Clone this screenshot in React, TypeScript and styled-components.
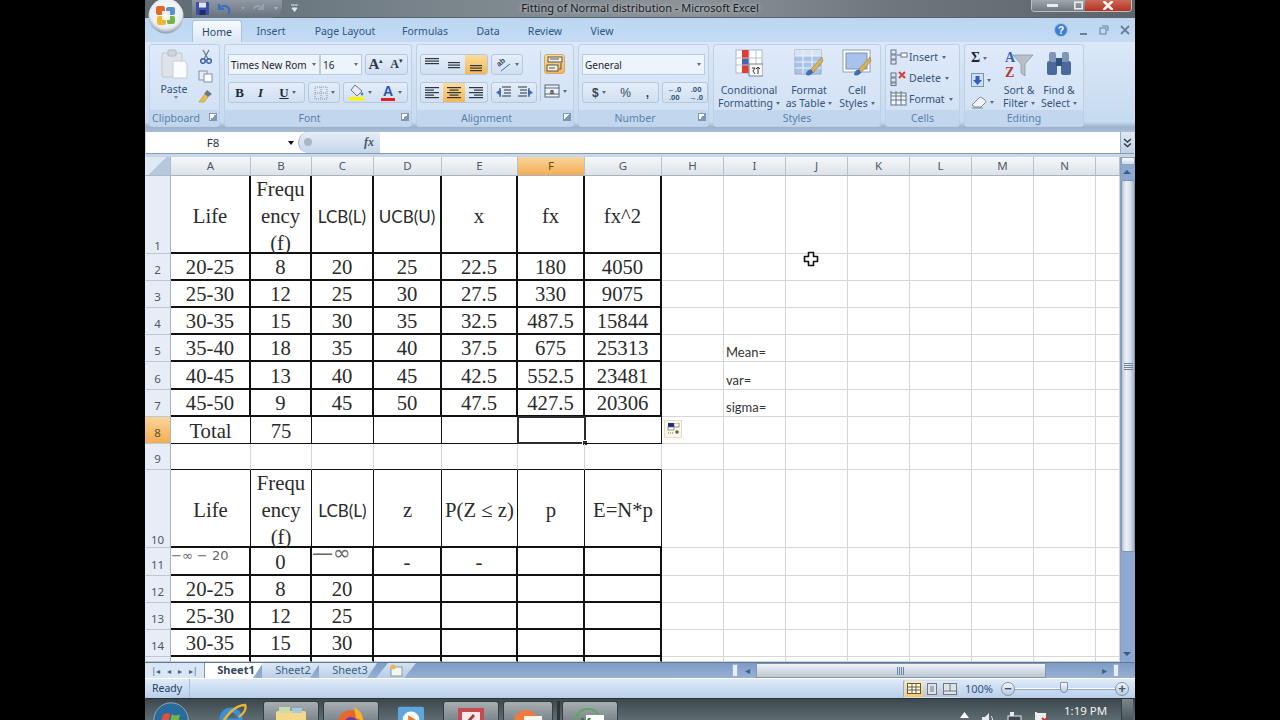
import React from 'react';
import styled, { createGlobalStyle } from 'styled-components';

const GlobalStyle = createGlobalStyle`
  html, body { margin: 0; padding: 0; background: #000; overflow: hidden; }
  * { box-sizing: border-box; }
`;

const UI_FONT = `'Noto Sans', 'Liberation Sans', sans-serif`;
const COLUMNS = [26, 80, 61, 62, 68, 76, 67, 77, 62, 62, 62, 62, 62, 62, 62, 24];
const COLUMN_NAMES = ['A', 'B', 'C', 'D', 'E', 'F', 'G', 'H', 'I', 'J', 'K', 'L', 'M', 'N', ''];

type Line = 'grid' | 'thin' | 'thick';
type RowData = { num: number; h: number; v: Line; b: Line; cells: string[] };

const thick = (num: number, cells: string[], h = 27): RowData => ({ num, h, v: 'thick', b: 'thick', cells });
const HEAD = 'Frequ\nency\n(f)';

const ROWS: RowData[] = [
  thick(1, ['Life', HEAD, 'LCB(L)', 'UCB(U)', 'x', 'fx', 'fx^2'], 78),
  thick(2, ['20-25', '8', '20', '25', '22.5', '180', '4050']),
  thick(3, ['25-30', '12', '25', '30', '27.5', '330', '9075']),
  thick(4, ['30-35', '15', '30', '35', '32.5', '487.5', '15844']),
  thick(5, ['35-40', '18', '35', '40', '37.5', '675', '25313']),
  thick(6, ['40-45', '13', '40', '45', '42.5', '552.5', '23481'], 28),
  thick(7, ['45-50', '9', '45', '50', '47.5', '427.5', '20306']),
  { num: 8, h: 27, v: 'thin', b: 'thin', cells: ['Total', '75', '', '', '', '', ''] },
  { num: 9, h: 26, v: 'grid', b: 'thin', cells: ['', '', '', '', '', '', ''] },
  { num: 10, h: 78, v: 'thin', b: 'thick', cells: ['Life', HEAD, 'LCB(L)', 'z', 'P(Z ≤ z)', 'p', 'E=N*p'] },
  thick(11, ['', '0', '', '-', '-', '', ''], 28),
  thick(12, ['20-25', '8', '20', '', '', '', '']),
  thick(13, ['25-30', '12', '25', '', '', '', '']),
  thick(14, ['30-35', '15', '30', '', '', '', '']),
  { num: 15, h: 5, v: 'thick', b: 'grid', cells: ['', '', '', '', '', '', ''] },
];

const SIDE_NOTES: Record<number, string> = { 5: 'Mean=', 6: 'var=', 7: 'sigma=' };
const lineColor = (l: Line) => (l === 'grid' ? '#d4d6d8' : '#111');
const lineWidth = (l: Line) => (l === 'thick' ? 2 : 1);

export default function App() {
  return (
    <Page>
      <GlobalStyle />
      <Excel>
        <TitleBar />
        <TabRow />
        <Ribbon />
        <FormulaBar />
        <Sheet />
        <SheetTabs />
        <StatusBar />
        <TaskBar />
      </Excel>
    </Page>
  );
}

function TitleBar() {
  return (
    <TitleWrap>
      <Orb viewBox="0 0 36 36">
        <defs>
          <radialGradient id="orbg" cx="50%" cy="40%" r="60%">
            <stop offset="0" stopColor="#fff" />
            <stop offset="0.75" stopColor="#e8edf2" />
            <stop offset="1" stopColor="#8f9aa5" />
          </radialGradient>
        </defs>
        <circle cx="18" cy="18" r="17.5" fill="url(#orbg)" />
        <rect x="8" y="8" width="9" height="9" rx="2" fill="#e2682c" />
        <rect x="18" y="9" width="9" height="8" rx="2" fill="#5a8fd0" />
        <rect x="9" y="18" width="9" height="9" rx="2" fill="#f2b632" />
        <rect x="19" y="18" width="8" height="8" rx="2" fill="#73b34a" />
        <rect x="14" y="13" width="8" height="9" fill="#fff" opacity="0.85" />
      </Orb>
      <QuickAccess>
        <svg width="15" height="15" viewBox="0 0 15 15">
          <rect x="1" y="1" width="13" height="13" rx="1" fill="#3f4fa6" />
          <rect x="4" y="1.5" width="7" height="5" fill="#dfe6f5" />
          <rect x="4.5" y="9" width="6" height="5" fill="#1f2a70" />
        </svg>
        <svg width="16" height="14" viewBox="0 0 16 14" fill="none">
          <path d="M3 2v5h5M3.5 6.5C6 3 11 3 13 7c.8 2 .3 4-1 5.5" stroke="#3d6fc0" strokeWidth="2.2" />
        </svg>
        <SmallCaret $color="#9aa4ae" />
        <svg width="14" height="14" viewBox="0 0 14 14" fill="none" opacity="0.35">
          <path d="M12 2v5H7M11.5 6.500C9 3 4.500 3 2.500 7" stroke="#c4ccd4" strokeWidth="2" />
        </svg>
        <SmallCaret $color="#aab2ba" />
      </QuickAccess>
      <QuickMore>
        <svg width="7" height="9" viewBox="0 0 7 9">
          <path d="M0 1h7M1 4h5l-2.500 3.500z" stroke="#dfe6ee" fill="#dfe6ee" />
        </svg>
      </QuickMore>
      <TitleText>Fitting of Normal distribution - Microsoft Excel</TitleText>
      <WindowButtons>
        <WindowButton $w={40}>
          <svg width="11" height="4" viewBox="0 0 11 4"><rect width="11" height="3" fill="#e8ecef" /></svg>
        </WindowButton>
        <WindowButton $w={13}>
          <svg width="9" height="9" viewBox="0 0 11 10" fill="none">
            <rect x="1" y="1" width="9" height="8" stroke="#e8ecef" strokeWidth="2" />
          </svg>
        </WindowButton>
        <WindowButton $w={46} $close>
          <svg width="12" height="9" viewBox="0 0 12 9" fill="none">
            <path d="M1.500 0l9 9M10.500 0l-9 9" stroke="#f4f4f4" strokeWidth="2.500" />
          </svg>
        </WindowButton>
      </WindowButtons>
    </TitleWrap>
  );
}

const TABS: [string, number][] = [
  ['Insert', 58],
  ['Page Layout', 90],
  ['Formulas', 70],
  ['Data', 56],
  ['Review', 58],
  ['View', 56],
];

function TabRow() {
  return (
    <TabsWrap>
      <ActiveTab>Home</ActiveTab>
      {TABS.map(([name, w]) => (
        <Tab key={name} $w={w}>{name}</Tab>
      ))}
      <TabTools>
        <svg width="14" height="14" viewBox="0 0 14 14">
          <circle cx="7" cy="7" r="6.500" fill="#3f7fd0" stroke="#a9c6e8" />
          <text x="7" y="10.500" fontSize="10" fontWeight="700" textAnchor="middle" fill="#fff" fontFamily="Liberation Sans">?</text>
        </svg>
        <svg width="9" height="9" viewBox="0 0 9 9"><rect x="1" y="7" width="7" height="2" fill="#6d7f94" /></svg>
        <svg width="10" height="10" viewBox="0 0 10 10" fill="none">
          <rect x="1" y="3" width="6" height="6" stroke="#6d7f94" /><path d="M3 1h6v5" stroke="#6d7f94" />
        </svg>
        <svg width="10" height="10" viewBox="0 0 10 10"><path d="M1 1l8 8M9 1l-8 8" stroke="#6d7f94" strokeWidth="1.800" /></svg>
      </TabTools>
    </TabsWrap>
  );
}

function AlignLines({ x, align = 'c', top = 1 }: { x: number[]; align?: 'l' | 'c' | 'r'; top?: number }) {
  const left = (w: number) => (align === 'l' ? 0 : align === 'r' ? 14 - w : (14 - w) / 2);
  return (
    <svg width="14" height="14" viewBox="0 0 14 14">
      {x.map((w, i) => (
        <rect key={i} x={left(w)} y={i * 2.5 + top} width={w} height="1.200" fill="#2d3640" />
      ))}
    </svg>
  );
}

function Ribbon() {
  return (
    <RibbonWrap>
      <Group $w={71} label="Clipboard" launcher>
        <ClipBody>
          <PasteColumn>
            <svg width="28" height="32" viewBox="0 0 28 32">
              <rect x="2" y="5" width="20" height="24" rx="1" fill="#dfe3e8" stroke="#c2c8d0" />
              <rect x="8" y="2" width="8" height="6" rx="1" fill="#cfd4da" stroke="#b5bcc5" />
              <path d="M13 13h12l2 3v14H13z" fill="#fbfcfd" stroke="#c5ccd4" />
            </svg>
            <PasteLabel>Paste</PasteLabel>
            <SmallCaret $color="#7a8a9c" />
          </PasteColumn>
          <ClipTools>
            <svg width="14" height="15" viewBox="0 0 14 15" fill="none">
              <path d="M4 1l5 9M10 1L5 10" stroke="#6b7c90" strokeWidth="1.300" />
              <circle cx="4" cy="12" r="2.300" stroke="#3f62a8" strokeWidth="1.500" />
              <circle cx="10" cy="12" r="2.300" stroke="#3f62a8" strokeWidth="1.500" />
            </svg>
            <svg width="15" height="13" viewBox="0 0 15 13">
              <rect x="1" y="1" width="8" height="9" fill="#e8eef6" stroke="#7d93ad" />
              <rect x="6" y="4" width="8" height="8" fill="#fff" stroke="#7d93ad" />
            </svg>
            <svg width="15" height="14" viewBox="0 0 15 14">
              <path d="M9 1l5 4-4 3-4-3z" fill="#6a7788" />
              <path d="M7 5l3 3-4 5H1z" fill="#e8c04e" stroke="#b08f2c" strokeWidth="0.600" />
            </svg>
          </ClipTools>
        </ClipBody>
      </Group>

      <Group $w={188} label="Font" launcher>
        <ToolRows>
          <ToolRow>
            <Combo $w={92} $join>Times New Rom<SmallCaret $color="#5c6b7c" /></Combo>
            <Combo $w={42}>16<SmallCaret $color="#5c6b7c" /></Combo>
            <ToolSet>
              <ToolBtn $w={20}><GrowGlyph>A</GrowGlyph><Tip>▴</Tip></ToolBtn>
              <ToolBtn $w={21}><ShrinkGlyph>A</ShrinkGlyph><Tip>▾</Tip></ToolBtn>
            </ToolSet>
          </ToolRow>
          <ToolRow>
            <ToolSet>
              <ToolBtn $w={21}><Letter $bold>B</Letter></ToolBtn>
              <ToolBtn $w={21}><Letter $italic>I</Letter></ToolBtn>
              <ToolBtn $w={33}><Letter $under>U</Letter><SmallCaret $color="#5c6b7c" /></ToolBtn>
            </ToolSet>
            <ToolSet>
              <ToolBtn $w={30}>
                <svg width="14" height="14" viewBox="0 0 14 14" fill="none" stroke="#8a96a4" strokeDasharray="1 1">
                  <rect x="1" y="1" width="12" height="12" /><path d="M7 1v12M1 7h12" />
                </svg>
                <SmallCaret $color="#5c6b7c" />
              </ToolBtn>
            </ToolSet>
            <ToolSet>
              <ToolBtn $w={32}>
                <svg width="17" height="17" viewBox="0 0 17 17">
                  <path d="M7 1l7 6-5 5-6-6z" fill="#e8eef5" stroke="#6b7785" />
                  <circle cx="14" cy="10" r="1.400" fill="#4a7ec4" />
                  <rect x="1" y="13" width="15" height="3.500" fill="#fff200" />
                </svg>
                <SmallCaret $color="#5c6b7c" />
              </ToolBtn>
              <ToolBtn $w={31}>
                <ColorA>A</ColorA>
                <SmallCaret $color="#5c6b7c" />
              </ToolBtn>
            </ToolSet>
          </ToolRow>
        </ToolRows>
      </Group>

      <Group $w={158} label="Alignment" launcher>
        <AlignBody>
          <ToolRows>
            <ToolRow>
              <ToolSet>
                <ToolBtn $w={22}><AlignLines x={[14, 14, 14]} top={0} /></ToolBtn>
                <ToolBtn $w={22}><AlignLines x={[12, 12, 12]} top={4} /></ToolBtn>
                <ToolBtn $w={22} $on><AlignLines x={[12, 12, 12]} top={7} /></ToolBtn>
              </ToolSet>
              <ToolSet>
                <ToolBtn $w={30}>
                  <svg width="16" height="16" viewBox="0 0 16 16" fill="none">
                    <text x="0" y="0" fontSize="7.500" fontWeight="700" fill="#3a4654" fontFamily="Liberation Sans" transform="translate(3 10) rotate(-40)">ab</text>
                    <path d="M5 14l9-7" stroke="#3f6db5" />
                  </svg>
                  <SmallCaret $color="#5c6b7c" />
                </ToolBtn>
              </ToolSet>
            </ToolRow>
            <ToolRow>
              <ToolSet>
                <ToolBtn $w={22}><AlignLines x={[14, 9, 14, 9, 14]} align="l" /></ToolBtn>
                <ToolBtn $w={22} $on><AlignLines x={[14, 9, 14, 9, 14]} /></ToolBtn>
                <ToolBtn $w={22}><AlignLines x={[14, 9, 14, 9, 14]} align="r" /></ToolBtn>
              </ToolSet>
              <ToolSet>
                <ToolBtn $w={22}>
                  <svg width="15" height="13" viewBox="0 0 15 13">
                    <path d="M6 1h9M8 4h7M8 7h7M6 10h9M4 2v9" stroke="#2d3640" fill="none" />
                    <path d="M0 6.500L5 3v7z" fill="#3f6db5" />
                  </svg>
                </ToolBtn>
                <ToolBtn $w={22}>
                  <svg width="15" height="13" viewBox="0 0 15 13">
                    <path d="M0 1h9M2 4h7M2 7h7M0 10h9M11 2v9" stroke="#2d3640" fill="none" />
                    <path d="M15 6.500L10 3v7z" fill="#3f6db5" />
                  </svg>
                </ToolBtn>
              </ToolSet>
            </ToolRow>
          </ToolRows>
          <AlignSide>
            <WrapButton>
              <svg width="17" height="17" viewBox="0 0 17 17" fill="none" stroke="#4a5562">
                <rect x="2" y="1" width="14" height="5" fill="#f8f2dc" />
                <rect x="1" y="9" width="11" height="6" fill="#f8f2dc" />
                <path d="M4 3h9M3 12h6M15 7v6h-2" />
              </svg>
            </WrapButton>
            <MergeButton>
              <svg width="16" height="14" viewBox="0 0 16 14" fill="none" stroke="#56657a">
                <rect x="1" y="1" width="14" height="12" fill="#eef3f9" />
                <path d="M1 4h14M1 10h14" />
                <text x="8" y="9.500" fontSize="7" fontWeight="700" textAnchor="middle" fill="#333" stroke="none" fontFamily="Liberation Sans">a</text>
              </svg>
              <SmallCaret $color="#5c6b7c" />
            </MergeButton>
          </AlignSide>
        </AlignBody>
      </Group>

      <Group $w={131} label="Number" launcher>
        <ToolRows>
          <ToolRow>
            <Combo $w={123}>General<SmallCaret $color="#5c6b7c" /></Combo>
          </ToolRow>
          <ToolRow>
            <ToolSet>
              <ToolBtn $w={32}><NumGlyph $bold>$</NumGlyph><SmallCaret $color="#5c6b7c" /></ToolBtn>
              <ToolBtn $w={22}><NumGlyph>%</NumGlyph></ToolBtn>
              <ToolBtn $w={22}><NumGlyph $bold>,</NumGlyph></ToolBtn>
            </ToolSet>
            <ToolSet>
              <ToolBtn $w={22}><Decimal><b>←.0</b><b>.00</b></Decimal></ToolBtn>
              <ToolBtn $w={22}><Decimal><b>.00</b><b>→.0</b></Decimal></ToolBtn>
            </ToolSet>
          </ToolRow>
        </ToolRows>
      </Group>

      <Group $w={168} label="Styles">
        <BigButtons>
          <BigButton $w={62} first="Conditional" second="Formatting">
            <svg width="28" height="28" viewBox="0 0 28 28">
              <rect x="1" y="1" width="26" height="23" fill="#fff" stroke="#aeb9c6" />
              <rect x="7" y="1" width="7" height="9" fill="#e03c31" />
              <rect x="7" y="10" width="7" height="6" fill="#4a62b8" />
              <rect x="7" y="16" width="7" height="8" fill="#e03c31" />
              <path d="M1 9h26M1 16h26M14 1v23M21 1v23" stroke="#b8c3d0" fill="none" />
              <rect x="14" y="15" width="14" height="12" fill="#f7f8fa" stroke="#76808c" />
              <path d="M17 19h3l-2 3 2 3M23 18v7M21 20l2-2 2 2" stroke="#333" fill="none" />
            </svg>
          </BigButton>
          <BigButton $w={58} first="Format" second="as Table">
            <svg width="30" height="28" viewBox="0 0 30 28">
              <rect x="1" y="1" width="26" height="24" fill="#a9c4ea" stroke="#9aa9bb" />
              <rect x="1" y="1" width="26" height="6" fill="#d9e4f2" />
              <path d="M1 7h26M1 13h26M1 19h26M9 1v24M18 1v24" stroke="#eef3fa" fill="none" />
              <path d="M28 8L16 21l3 3 10-12z" fill="#d7b25a" stroke="#8a7032" strokeWidth="0.500" />
              <path d="M12 26c0-4 3-6 6-5l1 3c-2 2-4 3-7 2z" fill="#3f6db5" />
            </svg>
          </BigButton>
          <BigButton $w={38} first="Cell" second="Styles">
            <svg width="30" height="28" viewBox="0 0 30 28">
              <rect x="1" y="1" width="27" height="22" fill="#fff" stroke="#8ea0b5" />
              <rect x="4" y="4" width="21" height="16" fill="#a8c2f0" stroke="#7e93b0" />
              <path d="M28 8L16 21l3 3 10-12z" fill="#d7b25a" stroke="#8a7032" strokeWidth="0.500" />
              <path d="M12 26c0-4 3-6 6-5l1 3c-2 2-4 3-7 2z" fill="#3f6db5" />
            </svg>
          </BigButton>
        </BigButtons>
      </Group>

      <Group $w={75} label="Cells">
        <CellsList>
          <CellsItem>
            <svg width="18" height="16" viewBox="0 0 18 16" fill="none" stroke="#667585">
              <rect x="1" y="1" width="5" height="4" /><rect x="1" y="6" width="5" height="4" /><rect x="1" y="11" width="5" height="4" />
              <rect x="11" y="4" width="6" height="4" fill="#fff" />
              <path d="M11 6H7" stroke="#3f6db5" />
            </svg>
            Insert<SmallCaret $color="#5c6b7c" />
          </CellsItem>
          <CellsItem>
            <svg width="18" height="16" viewBox="0 0 18 16" fill="none" stroke="#667585">
              <rect x="1" y="3" width="5" height="4" /><rect x="1" y="8" width="5" height="4" /><rect x="1" y="13" width="5" height="2.500" />
              <path d="M9 2l6 6M15 2L9 8" stroke="#d8413a" strokeWidth="2" />
            </svg>
            Delete<SmallCaret $color="#5c6b7c" />
          </CellsItem>
          <CellsItem>
            <svg width="18" height="16" viewBox="0 0 18 16" fill="none" stroke="#667585">
              <rect x="1" y="2" width="15" height="12" fill="#f3f5f8" />
              <path d="M1 5h15M1 9h15M6 2v12M11 2v12M1 0v2M6 0v2M11 0v2" />
            </svg>
            Format<SmallCaret $color="#5c6b7c" />
          </CellsItem>
        </CellsList>
      </Group>

      <Group $w={120} label="Editing">
        <EditBody>
          <EditTools>
            <EditTool><Sigma>Σ</Sigma><SmallCaret $color="#5c6b7c" /></EditTool>
            <EditTool>
              <svg width="13" height="14" viewBox="0 0 13 14">
                <rect x="0.500" y="0.500" width="12" height="13" fill="#cfe0f5" stroke="#7e93b0" />
                <path d="M4.500 3h4v4H11l-4.500 5L2 7h2.500z" fill="#2f62c0" />
              </svg>
              <SmallCaret $color="#5c6b7c" />
            </EditTool>
            <EditTool>
              <svg width="16" height="13" viewBox="0 0 16 13">
                <path d="M1 9l7-7c1-1 2-1 3 0l3 2c1 1 1 2 0 3l-4 4H4z" fill="#f3f4f6" stroke="#7a8794" />
                <path d="M1 12h11" stroke="#7a8794" />
              </svg>
              <SmallCaret $color="#5c6b7c" />
            </EditTool>
          </EditTools>
          <BigButton $w={40} first="Sort &" second="Filter">
            <svg width="30" height="30" viewBox="0 0 30 30">
              <text x="1" y="13" fontSize="14" fontWeight="700" fill="#3a5fae" fontFamily="Liberation Serif">A</text>
              <text x="1" y="28" fontSize="14" fontWeight="700" fill="#b5392c" fontFamily="Liberation Serif">Z</text>
              <path d="M9 6h20l-8 9v12l-4-3v-9z" fill="#b9bfc6" stroke="#7f8891" strokeWidth="0.600" />
            </svg>
          </BigButton>
          <BigButton $w={40} first="Find &" second="Select">
            <svg width="28" height="28" viewBox="0 0 28 28">
              <rect x="2" y="12" width="10" height="14" rx="2" fill="#4a6a9c" />
              <rect x="16" y="12" width="10" height="14" rx="2" fill="#4a6a9c" />
              <rect x="4" y="3" width="7" height="10" rx="2" fill="#7f96b8" />
              <rect x="17" y="3" width="7" height="10" rx="2" fill="#7f96b8" />
              <rect x="11" y="9" width="6" height="8" fill="#35507e" />
            </svg>
          </BigButton>
        </EditBody>
      </Group>
    </RibbonWrap>
  );
}

function Group({ $w, label, launcher, children }: { $w: number; label: string; launcher?: boolean; children: React.ReactNode }) {
  return (
    <GroupBox $w={$w}>
      <GroupBody>{children}</GroupBody>
      <GroupLabel $launcher={launcher}>
        {label}
        {launcher && <Launcher />}
      </GroupLabel>
    </GroupBox>
  );
}

function BigButton({ $w, first, second, children }: { $w: number; first: string; second: string; children: React.ReactNode }) {
  return (
    <BigButtonBox $w={$w}>
      <BigIcon>{children}</BigIcon>
      <span>{first}</span>
      <BigSecond>{second}<SmallCaret $color="#5c6b7c" /></BigSecond>
    </BigButtonBox>
  );
}

function FormulaBar() {
  return (
    <FormulaWrap>
      <FormulaRow>
        <NameBox>
          F8
          <NameArrow />
        </NameBox>
        <FxPill>
          <FxDot />
          <Fx>fx</Fx>
        </FxPill>
        <FormulaInput />
        <FormulaExpand>
          <svg width="9" height="10" viewBox="0 0 9 10" fill="none" stroke="#2f3a46" strokeWidth="1.400">
            <path d="M1 1l3.500 3L8 1M1 5.500l3.500 3 3.500-3" />
          </svg>
        </FormulaExpand>
      </FormulaRow>
    </FormulaWrap>
  );
}

function Sheet() {
  return (
    <SheetWrap>
      <Grid>
        <Corner />
        {COLUMN_NAMES.map((name) => (
          <ColHead key={name || 'end'} $on={name === 'F'}>{name}</ColHead>
        ))}
        {ROWS.map((row) => (
          <SheetRow key={row.num} row={row} />
        ))}
      </Grid>
      <VScroll>
        <SplitBox />
        <ScrollArrow $up />
        <VThumb><Grip /></VThumb>
        <VTrack />
        <ScrollArrow />
      </VScroll>
    </SheetWrap>
  );
}

function SheetRow({ row }: { row: RowData }) {
  const tall = row.h > 30;
  return (
    <>
      <RowHead $on={row.num === 8} $tall={tall}>{row.h > 6 ? row.num : ''}</RowHead>
      {COLUMN_NAMES.map((_, i) => {
        const inTable = i < 7;
        const text = inTable ? row.cells[i] : '';
        const sans = text === 'LCB(L)' || text === 'UCB(U)';
        return (
          <Cell
            key={i}
            $v={inTable ? row.v : 'grid'}
            $b={inTable ? row.b : 'grid'}
            $sans={sans}
            $tall={tall}
          >
            {text}
            {row.num === 11 && i === 0 && <MathNote>−∞ − 20</MathNote>}
            {row.num === 11 && i === 2 && <MathNote $big>—∞</MathNote>}
            {i === 8 && SIDE_NOTES[row.num] && <SideNote>{SIDE_NOTES[row.num]}</SideNote>}
            {row.num === 8 && i === 5 && <Selection><FillHandle /></Selection>}
            {row.num === 8 && i === 7 && (
              <PasteOptions>
                <svg width="13" height="12" viewBox="0 0 13 12">
                  <rect x="1" y="0" width="6" height="4" fill="#1c2f86" />
                  <rect x="7" y="0" width="5" height="4" fill="#fff" stroke="#555" strokeWidth="0.600" />
                  <rect x="1" y="4" width="6" height="3" fill="#fff" stroke="#555" strokeWidth="0.600" />
                  <path d="M1 10h5" stroke="#666" strokeDasharray="1 1" />
                  <path d="M10 7v4M8 9h4" stroke="#333" />
                </svg>
              </PasteOptions>
            )}
            {row.num === 2 && i === 9 && (
              <CellCursor viewBox="0 0 16 16">
                <path d="M5.500 1.500h5v4h4v5h-4v4h-5v-4h-4v-5h4z" fill="#fff" stroke="#111" strokeWidth="1.600" strokeLinejoin="round" />
              </CellCursor>
            )}
          </Cell>
        );
      })}
    </>
  );
}

function SheetTabs() {
  return (
    <TabsBar>
      <NavArrows>
        <NavArrow>|◂</NavArrow>
        <NavArrow>◂</NavArrow>
        <NavArrow>▸</NavArrow>
        <NavArrow>▸|</NavArrow>
      </NavArrows>
      <SheetTab $active>Sheet1</SheetTab>
      <SheetTab>Sheet2</SheetTab>
      <SheetTab>Sheet3</SheetTab>
      <NewSheet>
        <svg width="15" height="13" viewBox="0 0 15 13">
          <rect x="2" y="3" width="11" height="9" fill="#f5f6f2" stroke="#8a97a6" />
          <circle cx="4" cy="3" r="2.500" fill="#e8b94c" />
        </svg>
      </NewSheet>
      <TabsFill />
      <SplitHandle />
      <HArrow>◂</HArrow>
      <HThumb><Grip $flat /></HThumb>
      <HTrack />
      <HArrow>▸</HArrow>
      <SplitHandle />
      <TabsEnd />
    </TabsBar>
  );
}

function StatusBar() {
  return (
    <StatusWrap>
      <StatusText>Ready</StatusText>
      <StatusFill />
      <ViewButtons>
        <ViewButton $on>
          <svg width="14" height="11" viewBox="0 0 14 11" fill="#fff" stroke="#6a5a2c">
            <rect x="0.500" y="0.500" width="13" height="10" /><path d="M0 4h14M0 7h14M5 0v11M9 0v11" fill="none" />
          </svg>
        </ViewButton>
        <ViewButton>
          <svg width="12" height="12" viewBox="0 0 12 12" fill="#dfe3e8" stroke="#6d7886">
            <rect x="1.500" y="0.500" width="9" height="11" /><path d="M4 4h4M4 6h4M4 8h4" />
          </svg>
        </ViewButton>
        <ViewButton>
          <svg width="14" height="12" viewBox="0 0 14 12" fill="#dfe3e8" stroke="#6d7886">
            <rect x="0.500" y="0.500" width="13" height="11" /><path d="M7 0v8M0 8h14" />
          </svg>
        </ViewButton>
      </ViewButtons>
      <ZoomText>100%</ZoomText>
      <ZoomButton>−</ZoomButton>
      <ZoomTrack><ZoomThumb /></ZoomTrack>
      <ZoomButton>+</ZoomButton>
    </StatusWrap>
  );
}

function TaskBar() {
  return (
    <TaskWrap>
      <StartOrb viewBox="0 0 44 44">
        <circle cx="22" cy="22" r="21" fill="#2b6a9c" stroke="#9fb8c6" />
        <path d="M12 16c4-3 7-3 9-1l-2 9c-2-2-5-2-9 1z" fill="#e0523a" />
        <path d="M23 15c3 2 6 2 10 0l-2 9c-4 2-7 2-10 0z" fill="#74b843" />
        <path d="M10 27c4-3 7-3 9-1l-1 6c-3-2-6-2-9 0z" fill="#3f8fd8" />
        <path d="M20 26c3 2 6 2 10 0l-1 6c-4 2-7 2-10 0z" fill="#f0c034" />
      </StartOrb>
      <TaskIcon $w={72} $pad={14}>
        <svg width="32" height="32" viewBox="0 0 32 32" fill="none">
          <circle cx="15" cy="17" r="9" stroke="#3a8fdc" strokeWidth="5" />
          <path d="M4 18h22" stroke="#3a8fdc" strokeWidth="3" />
          <path d="M4 26C10 12 20 3 29 3c2 4-2 9-6 12" stroke="#e8b732" strokeWidth="2.500" />
        </svg>
      </TaskIcon>
      <TaskButton>
        <svg width="32" height="30" viewBox="0 0 32 30">
          <rect x="1" y="6" width="30" height="22" rx="2" fill="#f3d989" />
          <rect x="4" y="2" width="11" height="6" fill="#c8dcae" /><rect x="17" y="3" width="10" height="5" fill="#a9c9e2" />
        </svg>
      </TaskButton>
      <TaskButton>
        <svg width="30" height="32" viewBox="0 0 30 32">
          <circle cx="15" cy="18" r="13" fill="#e8682a" />
          <circle cx="15" cy="19" r="7" fill="#6a3bb0" />
          <path d="M18 2c6 3 9 8 9 14l-7-3z" fill="#f5b52c" />
        </svg>
      </TaskButton>
      <TaskIcon $w={60}>
        <svg width="28" height="32" viewBox="0 0 30 32">
          <rect x="1" y="4" width="28" height="26" rx="2" fill="#5ea6dc" />
          <circle cx="15" cy="18" r="9" fill="#fff" />
          <path d="M12 13l8 5-8 5z" fill="#ee7a20" />
        </svg>
      </TaskIcon>
      <TaskButton>
        <svg width="30" height="32" viewBox="0 0 30 32">
          <rect x="2" y="3" width="26" height="27" fill="#c84a4e" />
          <rect x="6" y="7" width="18" height="20" fill="#f6eaea" />
          <path d="M9 18l8-9 2 2-8 9z" fill="#a83a3e" />
        </svg>
      </TaskButton>
      <TaskButton $w={50}>
        <svg width="30" height="32" viewBox="0 0 30 32">
          <circle cx="13" cy="17" r="12" fill="#ef7a3c" />
          <rect x="11" y="11" width="18" height="20" fill="#faf5ec" />
          <rect x="14" y="15" width="8" height="8" fill="#e2562a" />
        </svg>
      </TaskButton>
      <TaskSep />
      <TaskButton>
        <svg width="32" height="32" viewBox="0 0 32 32">
          <circle cx="14" cy="17" r="13" fill="none" stroke="#5aa860" strokeWidth="2" />
          <rect x="12" y="10" width="18" height="20" fill="#fafdf8" />
          <text x="6" y="25" fontSize="17" fontWeight="700" fill="#2f7d3b" fontFamily="Liberation Sans">X</text>
        </svg>
      </TaskButton>
      <TaskFill />
      <TrayIcons>
        <svg width="9" height="6" viewBox="0 0 9 6"><path d="M4.500 0L9 6H0z" fill="#fff" /></svg>
        <svg width="14" height="16" viewBox="0 0 14 16"><path d="M1 5h3l4-4v14l-4-4H1z" fill="#e8eaec" /><path d="M10 4c2 2 2 6 0 8" stroke="#e8eaec" fill="none" /></svg>
        <svg width="15" height="14" viewBox="0 0 15 14"><rect x="1" y="4" width="13" height="10" fill="#3d4a52" stroke="#e8eaec" /><rect x="3" y="0" width="4" height="4" fill="#e8eaec" /></svg>
        <svg width="14" height="14" viewBox="0 0 14 14"><path d="M2 0v14" stroke="#e8eaec" strokeWidth="2" /><path d="M3 1h9v7H3z" fill="#eef0f2" /><path d="M8 6l5 5M13 6l-5 5" stroke="#d8312c" strokeWidth="2" /></svg>
      </TrayIcons>
      <Clock>1:19 PM</Clock>
      <ShowDesktop />
    </TaskWrap>
  );
}

const Page = styled.div`
  width: 1280px;
  height: 720px;
  background: #000;
  display: flex;
  justify-content: center;
  overflow: hidden;
`;

const Excel = styled.div`
  width: 990px;
  height: 720px;
  display: flex;
  flex-direction: column;
  font-family: ${UI_FONT};
  background: #c6d9ee;
  overflow: hidden;
`;

const SmallCaret = styled.i<{ $color: string }>`
  display: inline-block;
  flex: none;
  width: 0;
  height: 0;
  margin-left: 3px;
  border-left: 2.5px solid transparent;
  border-right: 2.5px solid transparent;
  border-top: 3px solid ${(p) => p.$color};
`;

/* title bar */
const TitleWrap = styled.div`
  position: relative;
  flex: none;
  height: 18px;
  display: flex;
  align-items: center;
  padding-left: 47px;
  background: linear-gradient(90deg, #5e6a72 0%, #7a858c 30%, #8b9398 55%, #6d777d 75%, #5b656b 100%);
  border-bottom: 1px solid #59636b;
`;

const Orb = styled.svg`
  position: absolute;
  left: 3px;
  top: -2px;
  width: 36px;
  height: 36px;
  z-index: 3;
`;

const QuickAccess = styled.div`
  display: flex;
  align-items: center;
  gap: 6px;
  height: 18px;
  width: 90px;
  padding-left: 3px;
  background: linear-gradient(#8e99a5, #67727d);
  border-radius: 0 0 12px 0;
`;

const QuickMore = styled.div`
  display: flex;
  margin-left: 9px;
`;

const TitleText = styled.div`
  position: absolute;
  left: 0;
  right: 0;
  top: 0;
  text-align: center;
  font-size: 11px;
  line-height: 15px;
  color: #14191d;
  text-shadow: 0 0 4px rgba(255, 255, 255, 0.7);
`;

const WindowButtons = styled.div`
  position: absolute;
  right: 3px;
  top: 0;
  display: flex;
  height: 12px;
  border: 1px solid #b8c0c6;
  border-top: 0;
  border-radius: 0 0 4px 4px;
  overflow: hidden;
`;

const WindowButton = styled.div<{ $w: number; $close?: boolean }>`
  width: ${(p) => p.$w}px;
  display: flex;
  align-items: center;
  justify-content: center;
  background: ${(p) => (p.$close ? 'linear-gradient(#c96a58, #b8301e)' : 'linear-gradient(#a0a9af, #6f787e)')};
`;

/* tabs */
const TabsWrap = styled.div`
  flex: none;
  height: 24px;
  display: flex;
  align-items: flex-end;
  padding-left: 47px;
  background: linear-gradient(#bcd6f2, #c4dbf3);
`;

const ActiveTab = styled.div`
  width: 50px;
  height: 22px;
  text-align: center;
  line-height: 23px;
  font-size: 10.5px;
  color: #26456b;
  background: linear-gradient(#f6fafe, #dce8f6);
  border: 1px solid #a9c2dd;
  border-bottom: 0;
  border-radius: 3px 3px 0 0;
`;

const Tab = styled.div<{ $w: number }>`
  width: ${(p) => p.$w}px;
  height: 22px;
  text-align: center;
  line-height: 23px;
  font-size: 10.5px;
  color: #2f5580;
`;

const TabTools = styled.div`
  margin-left: auto;
  height: 24px;
  padding-right: 5px;
  display: flex;
  align-items: center;
  gap: 11px;
`;

/* ribbon */
const RibbonWrap = styled.div`
  flex: none;
  height: 90px;
  display: flex;
  gap: 4px;
  padding: 2px 4px 5px 4px;
  background: linear-gradient(#dbe8f7 0, #c6daf0 80px, #9db3cc 85px, #a9bdd4 90px);
`;

const GroupBox = styled.section<{ $w: number }>`
  flex: none;
  width: ${(p) => p.$w}px;
  height: 83px;
  display: flex;
  flex-direction: column;
  border: 1px solid #bcd0e6;
  border-radius: 3px;
  background: linear-gradient(#dfeafa, #cfe0f3);
`;

const GroupBody = styled.div`
  flex: 1;
  min-height: 0;
`;

const GroupLabel = styled.div<{ $launcher?: boolean }>`
  position: relative;
  flex: none;
  height: 16px;
  padding-right: ${(p) => (p.$launcher ? 17 : 0)}px;
  text-align: center;
  font-size: 10.5px;
  line-height: 17px;
  color: #5a80aa;
  background: #c2d7ee;
`;

const Launcher = styled.i`
  position: absolute;
  right: 2px;
  top: 3px;
  width: 8px;
  height: 8px;
  border: 1px solid #7d97b5;
  background: linear-gradient(135deg, #fff 50%, #7d97b5 50%);
`;

const ClipBody = styled.div`
  display: flex;
  padding: 2px 0 0 7px;
`;

const PasteColumn = styled.div`
  display: flex;
  flex-direction: column;
  align-items: center;
  width: 34px;
  svg { margin-top: 1px; }
`;

const PasteLabel = styled.span`
  font-size: 10.5px;
  line-height: 14px;
  color: #33557e;
  margin-top: 2px;
`;

const ClipTools = styled.div`
  display: flex;
  flex-direction: column;
  gap: 6px;
  align-items: center;
  margin-left: 7px;
  margin-top: 2px;
`;

const ToolRows = styled.div`
  display: flex;
  flex-direction: column;
  gap: 7px;
  padding: 9px 0 0 3px;
`;

const ToolRow = styled.div`
  display: flex;
  gap: 3px;
  height: 21px;
`;

const ToolSet = styled.div`
  display: flex;
  border: 1px solid #b5c8de;
  border-radius: 3px;
  background: linear-gradient(#e5eef9, #cfdff2);
  overflow: hidden;
`;

const ToolBtn = styled.div<{ $w: number; $on?: boolean }>`
  position: relative;
  width: ${(p) => p.$w}px;
  display: flex;
  align-items: center;
  justify-content: center;
  color: #2b3a4a;
  background: ${(p) => (p.$on ? 'linear-gradient(#fbdc9a, #f6b754)' : 'transparent')};
`;

const Combo = styled.div<{ $w: number; $join?: boolean }>`
  flex: none;
  width: ${(p) => p.$w}px;
  margin-right: ${(p) => (p.$join ? -3 : 0)}px;
  display: flex;
  align-items: center;
  justify-content: space-between;
  padding: 0 3px 0 2px;
  font-size: 10px;
  white-space: nowrap;
  color: #1d2733;
  background: #eef4fb;
  border: 1px solid #b9cce2;
`;

const GrowGlyph = styled.span`
  font: 700 15px 'Liberation Serif', serif;
  color: #2b3a4a;
`;

const ShrinkGlyph = styled.span`
  font: 700 12px 'Liberation Serif', serif;
  color: #2b3a4a;
`;

const Tip = styled.span`
  font-size: 7px;
  line-height: 7px;
  margin-bottom: 9px;
  color: #2b3a4a;
`;

const Letter = styled.span<{ $bold?: boolean; $italic?: boolean; $under?: boolean }>`
  font-family: 'Liberation Serif', serif;
  font-size: 13px;
  font-weight: 700;
  font-style: ${(p) => (p.$italic ? 'italic' : 'normal')};
  text-decoration: ${(p) => (p.$under ? 'underline' : 'none')};
  color: #1e2a38;
`;

const ColorA = styled.span`
  font: 700 14px/13px 'Liberation Sans', sans-serif;
  color: #2f55a8;
  border-bottom: 3px solid #e2201c;
  padding: 0 2px;
`;

const AlignBody = styled.div`
  display: flex;
`;

const AlignSide = styled.div`
  display: flex;
  flex-direction: column;
  align-items: flex-start;
  gap: 7px;
  margin: 6px 0 0 3px;
  padding: 3px 0 0 3px;
  height: 50px;
  border-left: 1px solid #b5c8de;
`;

const WrapButton = styled.div`
  width: 21px;
  height: 21px;
  display: flex;
  align-items: center;
  justify-content: center;
  border: 1px solid #d6a95c;
  border-radius: 3px;
  background: linear-gradient(#fbdc9a, #f6b754);
`;

const MergeButton = styled.div`
  display: flex;
  align-items: center;
  height: 21px;
`;

const NumGlyph = styled.span<{ $bold?: boolean }>`
  font: ${(p) => (p.$bold ? 700 : 400)} 12px 'Liberation Sans', sans-serif;
  color: #3a4654;
`;

const Decimal = styled.span`
  display: flex;
  flex-direction: column;
  align-items: center;
  font-size: 7.5px;
  line-height: 8px;
  color: #3f5a80;
  b { font-weight: 700; }
`;

const BigButtons = styled.div`
  display: flex;
  padding: 4px 0 0 4px;
`;

const BigButtonBox = styled.div<{ $w: number }>`
  flex: none;
  width: ${(p) => p.$w}px;
  display: flex;
  flex-direction: column;
  align-items: center;
  font-size: 10.5px;
  line-height: 13px;
  color: #33557e;
  white-space: nowrap;
`;

const BigIcon = styled.div`
  height: 35px;
  display: flex;
  align-items: flex-start;
  justify-content: center;
`;

const BigSecond = styled.span`
  display: flex;
  align-items: center;
`;

const CellsList = styled.div`
  display: flex;
  flex-direction: column;
  gap: 3px;
  padding: 3px 0 0 4px;
`;

const CellsItem = styled.div`
  display: flex;
  align-items: center;
  height: 18px;
  gap: 1px;
  font-size: 10.5px;
  color: #33557e;
`;

const EditBody = styled.div`
  display: flex;
  padding: 4px 0 0 6px;
`;

const EditTools = styled.div`
  display: flex;
  flex-direction: column;
  gap: 4px;
  width: 28px;
`;

const EditTool = styled.div`
  display: flex;
  align-items: center;
  height: 18px;
`;

const Sigma = styled.span`
  font: 700 14px 'Liberation Serif', serif;
  color: #1d2733;
`;

/* formula bar */
const FormulaWrap = styled.div`
  flex: none;
  height: 25px;
  padding: 0 1px;
  background: #c7d8ea;
`;

const FormulaRow = styled.div`
  height: 22px;
  display: flex;
  align-items: stretch;
  background: #fff;
  border-bottom: 1px solid #8e9aa8;
`;

const NameBox = styled.div`
  position: relative;
  flex: none;
  width: 152px;
  padding-right: 18px;
  text-align: center;
  font-size: 11.5px;
  line-height: 21px;
  color: #2b3440;
`;

const NameArrow = styled.i`
  position: absolute;
  right: 4px;
  top: 9px;
  border-left: 3.5px solid transparent;
  border-right: 3.5px solid transparent;
  border-top: 4px solid #111;
`;

const FxPill = styled.div`
  flex: none;
  width: 82px;
  position: relative;
  display: flex;
  align-items: center;
  justify-content: flex-end;
  padding-right: 6px;
  background: linear-gradient(#e6eef8, #c5d6ea);
  border-radius: 11px 0 0 11px;
  border-left: 1px solid #9fb3c9;
`;

const FxDot = styled.i`
  position: absolute;
  left: 5px;
  top: 6px;
  width: 8px;
  height: 8px;
  border-radius: 50%;
  background: #a9b7c6;
`;

const Fx = styled.span`
  font: italic 700 12px 'Liberation Serif', serif;
  color: #4a5663;
`;

const FormulaInput = styled.div`
  flex: 1;
`;

const FormulaExpand = styled.div`
  flex: none;
  width: 14px;
  display: flex;
  align-items: center;
  justify-content: center;
  background: linear-gradient(#dfe9f5, #c0d2e7);
  border-left: 1px solid #97abc2;
`;

/* sheet */
const SheetWrap = styled.div`
  flex: none;
  height: 505px;
  display: flex;
`;

const Grid = styled.div`
  width: 975px;
  height: 505px;
  display: grid;
  grid-template-columns: ${COLUMNS.map((c) => `${c}px`).join(' ')};
  grid-template-rows: 19px ${ROWS.map((r) => `${r.h}px`).join(' ')};
  overflow: hidden;
  background: #fff;
`;

const Corner = styled.div`
  background: linear-gradient(135deg, #dfe8f4 50%, #b6c8dd 50%);
  border-right: 1px solid #a9bacc;
  border-bottom: 1px solid #a9bacc;
`;

const ColHead = styled.div<{ $on?: boolean }>`
  text-align: center;
  font-size: 11.5px;
  line-height: 18px;
  color: ${(p) => (p.$on ? '#6b4e1c' : '#4d5966')};
  background: ${(p) => (p.$on ? 'linear-gradient(#f9d59b, #f2ae55)' : 'linear-gradient(#f6f8fa, #dde2e8)')};
  border-right: 1px solid #b7c0cb;
  border-bottom: 1px solid #a9b3bf;
`;

const RowHead = styled.div<{ $on?: boolean; $tall?: boolean }>`
  min-height: 0;
  display: flex;
  align-items: flex-end;
  justify-content: center;
  overflow: hidden;
  font-size: 11.5px;
  line-height: ${(p) => (p.$tall ? 15 : 20)}px;
  color: ${(p) => (p.$on ? '#6b4e1c' : '#4d5966')};
  background: ${(p) => (p.$on ? 'linear-gradient(#f9d59b, #f2ae55)' : '#e6edf7')};
  border-right: 1px solid #a9b3bf;
  border-bottom: 1px solid #bcc8d6;
`;

const Cell = styled.div<{ $v: Line; $b: Line; $sans?: boolean; $tall?: boolean }>`
  position: relative;
  min-width: 0;
  min-height: 0;
  padding-top: ${(p) => (p.$tall ? 4 : 2)}px;
  display: flex;
  align-items: center;
  justify-content: center;
  white-space: pre-line;
  text-align: center;
  font-family: ${(p) => (p.$sans ? `Lato, 'Noto Sans', sans-serif` : `'Liberation Serif', serif`)};
  font-size: ${(p) => (p.$sans ? 17 : 20.7)}px;
  line-height: 27px;
  color: #2b2b2b;
  border-right: ${(p) => lineWidth(p.$v)}px solid ${(p) => lineColor(p.$v)};
  border-bottom: ${(p) => lineWidth(p.$b)}px solid ${(p) => lineColor(p.$b)};
`;

const MathNote = styled.span<{ $big?: boolean }>`
  position: absolute;
  left: 0;
  top: ${(p) => (p.$big ? -3 : 0)}px;
  font-family: 'DejaVu Sans', sans-serif;
  font-size: ${(p) => (p.$big ? 21 : 13)}px;
  line-height: 16px;
  color: #666;
  white-space: nowrap;
`;

const SideNote = styled.span`
  position: absolute;
  left: 2px;
  bottom: 0;
  font: 400 13px/18px Lato, sans-serif;
  color: #333;
`;

const Selection = styled.div`
  position: absolute;
  inset: -1px -2px -1px -1px;
  border: 2px solid #2b2b2b;
`;

const FillHandle = styled.i`
  position: absolute;
  right: -4px;
  bottom: -4px;
  width: 6px;
  height: 6px;
  background: #2b2b2b;
  border: 1px solid #fff;
`;

const PasteOptions = styled.div`
  position: absolute;
  left: 2px;
  top: 3px;
  width: 18px;
  height: 18px;
  display: flex;
  align-items: center;
  justify-content: center;
  background: #fdf8e8;
  border: 1px solid #e7dcc0;
`;

const CellCursor = styled.svg`
  position: absolute;
  left: 17px;
  top: -3px;
  width: 16px;
  height: 16px;
`;

const VScroll = styled.div`
  flex: none;
  width: 15px;
  display: flex;
  flex-direction: column;
  align-items: stretch;
  background: #8da8d2;
  border-left: 1px solid #8aa0bf;
`;

const SplitBox = styled.div`
  height: 8px;
  background: linear-gradient(#fafcff, #cbdaec);
  border: 1px solid #8fa6c1;
  border-radius: 2px;
`;

const ScrollArrow = styled.div<{ $up?: boolean }>`
  flex: none;
  height: 15px;
  position: relative;
  &::after {
    content: '';
    position: absolute;
    left: 2px;
    top: 5px;
    border-left: 4px solid transparent;
    border-right: 4px solid transparent;
    ${(p) => (p.$up ? 'border-bottom: 4px solid #44597a;' : 'border-top: 4px solid #44597a;')}
  }
`;

const VThumb = styled.div`
  flex: none;
  height: 372px;
  display: flex;
  align-items: center;
  justify-content: center;
  background: linear-gradient(90deg, #b9c6d8, #eef2f7 35%, #d6dee8 70%, #a7b6ca);
  border: 1px solid #7f95b0;
  border-radius: 2px;
`;

const VTrack = styled.div`
  flex: 1;
`;

const Grip = styled.i<{ $flat?: boolean }>`
  display: block;
  width: ${(p) => (p.$flat ? 8 : 9)}px;
  height: ${(p) => (p.$flat ? 8 : 7)}px;
  background: repeating-linear-gradient(
    ${(p) => (p.$flat ? '90deg' : '0deg')},
    #6d84a0 0 1px,
    transparent 1px 2px
  );
`;

/* sheet tabs */
const TabsBar = styled.div`
  flex: none;
  height: 16px;
  display: flex;
  align-items: stretch;
  background: linear-gradient(#7f9cc6, #97b0d4);
  border-top: 1px solid #5d7896;
`;

const NavArrows = styled.div`
  flex: none;
  width: 60px;
  display: flex;
  align-items: center;
  justify-content: space-around;
  padding: 0 3px;
  background: #dae6f4;
  border-right: 1px solid #7f95b0;
`;

const NavArrow = styled.span`
  font-size: 8px;
  line-height: 14px;
  color: #36608e;
`;

const SheetTab = styled.div<{ $active?: boolean }>`
  flex: none;
  width: 58px;
  text-align: center;
  padding-left: 4px;
  font-size: 11px;
  line-height: 14px;
  font-weight: ${(p) => (p.$active ? 700 : 400)};
  color: ${(p) => (p.$active ? '#33465e' : '#3d5f88')};
  background: ${(p) => (p.$active ? '#fff' : 'linear-gradient(#dbe7f5, #bdd0e7)')};
  clip-path: polygon(0 0, 100% 0, calc(100% - 10px) 100%, 0 100%);
  margin-right: -1px;
`;

const NewSheet = styled.div`
  flex: none;
  width: 40px;
  display: flex;
  align-items: center;
  justify-content: center;
  background: linear-gradient(#d5e2f2, #b8cce4);
  clip-path: polygon(12px 0, 100% 0, calc(100% - 12px) 100%, 0 100%);
`;

const TabsFill = styled.div`
  flex: 1;
`;

const SplitHandle = styled.div`
  flex: none;
  width: 6px;
  margin: 1px 0;
  background: #e6eef8;
  border: 1px solid #9ab0cb;
`;

const HArrow = styled.div`
  flex: none;
  width: 18px;
  text-align: center;
  font-size: 10px;
  line-height: 14px;
  color: #3d5f88;
`;

const HThumb = styled.div`
  flex: none;
  width: 290px;
  display: flex;
  align-items: center;
  justify-content: center;
  background: linear-gradient(#f0f3f7, #bcc6d2);
  border: 1px solid #7f95b0;
`;

const HTrack = styled.div`
  flex: none;
  width: 49px;
`;

const TabsEnd = styled.div`
  flex: none;
  width: 16px;
`;

/* status bar */
const StatusWrap = styled.div`
  flex: none;
  height: 20px;
  display: flex;
  align-items: center;
  padding-right: 6px;
  background: linear-gradient(#dfebf9, #b9cfea);
  border-top: 1px solid #fff;
`;

const StatusText = styled.div`
  width: 45px;
  height: 100%;
  padding-left: 7px;
  font-size: 10.5px;
  line-height: 18px;
  color: #26405f;
  border-right: 1px solid #aac0da;
`;

const StatusFill = styled.div`
  flex: 1;
`;

const ViewButtons = styled.div`
  display: flex;
  height: 18px;
  padding: 1px;
  border-left: 1px solid #96acc6;
  background: #cfdff1;
  border-radius: 2px;
`;

const ViewButton = styled.div<{ $on?: boolean }>`
  width: 18px;
  display: flex;
  align-items: center;
  justify-content: center;
  background: ${(p) => (p.$on ? 'linear-gradient(#fde9bc, #f6c76a)' : 'linear-gradient(#dfe8f3, #b9c8da)')};
`;

const ZoomText = styled.div`
  width: 38px;
  margin-right: 3px;
  text-align: center;
  font-size: 11px;
  color: #2f5580;
`;

const ZoomButton = styled.div`
  flex: none;
  width: 14px;
  height: 14px;
  text-align: center;
  font: 700 13px/12px 'Liberation Sans', sans-serif;
  color: #44566c;
  border: 1px solid #7d93ad;
  border-radius: 50%;
  background: linear-gradient(#f4f7fb, #b9c9dc);
`;

const ZoomTrack = styled.div`
  position: relative;
  flex: none;
  width: 100px;
  height: 1px;
  background: #fff;
  box-shadow: 0 1px 0 #8ea7c4;
`;

const ZoomThumb = styled.i`
  position: absolute;
  left: 45px;
  top: -6px;
  width: 8px;
  height: 11px;
  background: linear-gradient(#f6f8fb, #bccbdd);
  border: 1px solid #7d93ad;
  border-radius: 1px 1px 4px 4px;
`;

/* windows taskbar */
const TaskWrap = styled.div`
  flex: none;
  height: 22px;
  display: flex;
  align-items: flex-start;
  padding-left: 8px;
  overflow: hidden;
  background: linear-gradient(#3c484d, #5e6c72);
  border-top: 1px solid #2a3236;
`;

const StartOrb = styled.svg`
  flex: none;
  width: 36px;
  height: 36px;
  margin-top: 3px;
`;

const TaskIcon = styled.div<{ $w: number; $pad?: number }>`
  flex: none;
  width: ${(p) => p.$w}px;
  display: flex;
  justify-content: center;
  padding-top: 3px;
  padding-left: ${(p) => p.$pad ?? 0}px;
`;

const TaskButton = styled.div<{ $w?: number }>`
  flex: none;
  width: ${(p) => p.$w ?? 56}px;
  height: 24px;
  margin: 2px 2px 0;
  display: flex;
  justify-content: center;
  padding-top: 3px;
  background: linear-gradient(#a7aeb2, #727c81);
  border: 1px solid #343d41;
  border-bottom: 0;
  border-radius: 3px 3px 0 0;
`;

const TaskSep = styled.i`
  flex: none;
  width: 3px;
  height: 22px;
  margin: 2px 0 0 2px;
  background: #2c3438;
`;

const TaskFill = styled.div`
  flex: 1;
`;

const TrayIcons = styled.div`
  display: flex;
  align-items: flex-start;
  gap: 12px;
  padding-top: 13px;
  margin-right: 16px;
`;

const Clock = styled.div`
  width: 50px;
  font-size: 11.5px;
  line-height: 24px;
  white-space: nowrap;
  color: #f2f4f5;
`;

const ShowDesktop = styled.div`
  width: 12px;
  height: 22px;
  margin: 0 2px 0 7px;
  background: linear-gradient(#7a868c, #4a555a);
  border-left: 1px solid #333c40;
`;
